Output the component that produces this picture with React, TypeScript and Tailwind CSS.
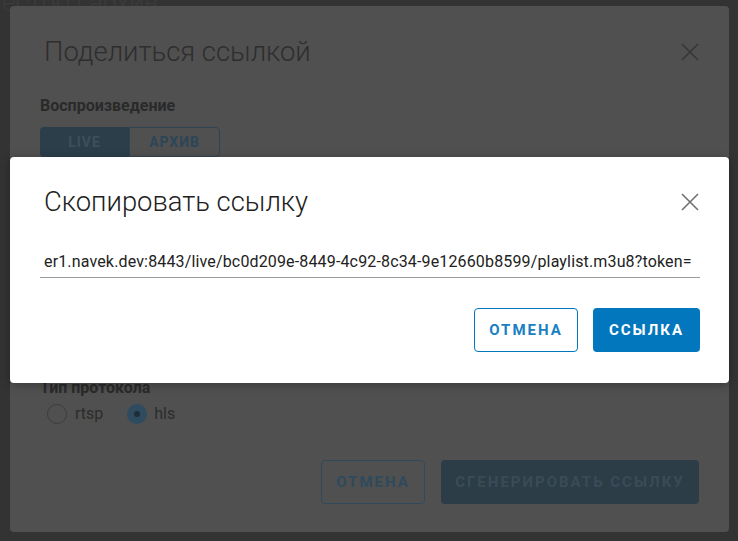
const font = { fontFamily: 'Roboto, "Noto Sans", sans-serif' };

function CloseIcon({ className }: { className: string }) {
  return (
    <svg width="18" height="18" viewBox="0 0 18 18" className={className} fill="none">
      <path d="M1 1L17 17M17 1L1 17" stroke="currentColor" strokeWidth="1.6" />
    </svg>
  );
}

export default function App() {
  return (
    <div style={font} className="relative w-[738px] h-[541px] overflow-hidden bg-[#333333]">
      {/* page behind the dialogs */}
      <span className="absolute top-[-17px] left-[2px] text-[26px] font-light text-[#3b3b3b] whitespace-nowrap">
        естро | архив
      </span>

      <div className="pt-[6px] pl-[10px] pr-[9px]">
        <div className="relative h-[526px] rounded-[4px] bg-[#505050] pt-[30px] pl-[30px] pr-[30px]">
          <div className="flex items-center justify-between pl-[4px]">
            <h2 className="text-[27.4px] leading-[32px] font-light text-[#2e2e2e]">Поделиться ссылкой</h2>
            <CloseIcon className="text-[#363636]" />
          </div>

          <div className="mt-[28px] text-[16px] leading-[20px] font-bold text-[#2a2a2a]">Воспроизведение</div>
          <div className="mt-[11px] flex">
            <div className="w-[89px] h-[30px] flex items-center justify-center rounded-l-[4px] bg-[#2c3e4a] text-[14px] font-bold tracking-[1px] text-[#3e4f5a]">
              LIVE
            </div>
            <div className="w-[91px] h-[30px] flex items-center justify-center rounded-r-[4px] border border-[#2e4453] text-[14px] font-bold tracking-[1px] text-[#2c4656]">
              АРХИВ
            </div>
          </div>

          <div className="h-[221px]" />

          <div className="text-[16px] leading-[20px] font-bold text-[#2a2a2a]">Тип протокола</div>
          <div className="mt-[6px] flex items-center h-[20px] pl-[7px]">
            <div className="w-[20px] h-[20px] rounded-full border-[1.5px] border-[#3d3d3d]" />
            <span className="ml-[8px] text-[16px] text-[#2c2c2c]">rtsp</span>
            <div className="ml-[24px] w-[20px] h-[20px] rounded-full bg-[#2e4b5f] flex items-center justify-center">
              <div className="w-[6px] h-[6px] rounded-full bg-[#1f2d37]" />
            </div>
            <span className="ml-[7px] text-[16px] text-[#2c2c2c]">hls</span>
          </div>

          <div className="mt-[36px] flex justify-end gap-[16px]">
            <div className="w-[104px] h-[44px] flex items-center justify-center rounded-[4px] border border-[#304a5b] text-[15px] font-bold tracking-[2px] text-[#2e4a5c]">
              ОТМЕНА
            </div>
            <div className="w-[258px] h-[44px] flex items-center justify-center rounded-[4px] bg-[#2c3d48] text-[15px] font-bold tracking-[2px] text-[#3b4b56]">
              СГЕНЕРИРОВАТЬ ССЫЛКУ
            </div>
          </div>
        </div>
      </div>

      {/* copy-link modal */}
      <div className="absolute top-[157px] left-[10px] w-[719px] h-[226px] rounded-[4px] bg-white pt-[29px] pl-[30px] pr-[29px] shadow-[0_2px_10px_rgba(0,0,0,0.3)]">
        <div className="flex items-center justify-between pl-[4px] pr-[1px]">
          <h2 className="text-[27.4px] leading-[32px] font-light text-[#212121]">Скопировать ссылку</h2>
          <CloseIcon className="text-[#6f6f6f]" />
        </div>

        <div className="mt-[32px] border-b border-[#9a9a9a] pb-[3px] overflow-hidden">
          <div className="pl-[4px] text-[16px] leading-[24px] tracking-[0.15px] text-[#222222] whitespace-nowrap">
            er1.navek.dev:8443/live/bc0d209e-8449-4c92-8c34-9e12660b8599/playlist.m3u8?token=
          </div>
        </div>

        <div className="mt-[30px] flex justify-end gap-[15px]">
          <button className="w-[104px] h-[44px] flex items-center justify-center rounded-[4px] border border-[#0277bd] text-[15px] font-bold tracking-[2px] text-[#1a80c2]">
            ОТМЕНА
          </button>
          <button className="w-[107px] h-[44px] flex items-center justify-center rounded-[4px] bg-[#0277bd] text-[15px] font-bold tracking-[2px] text-white">
            ССЫЛКА
          </button>
        </div>
      </div>
    </div>
  );
}
